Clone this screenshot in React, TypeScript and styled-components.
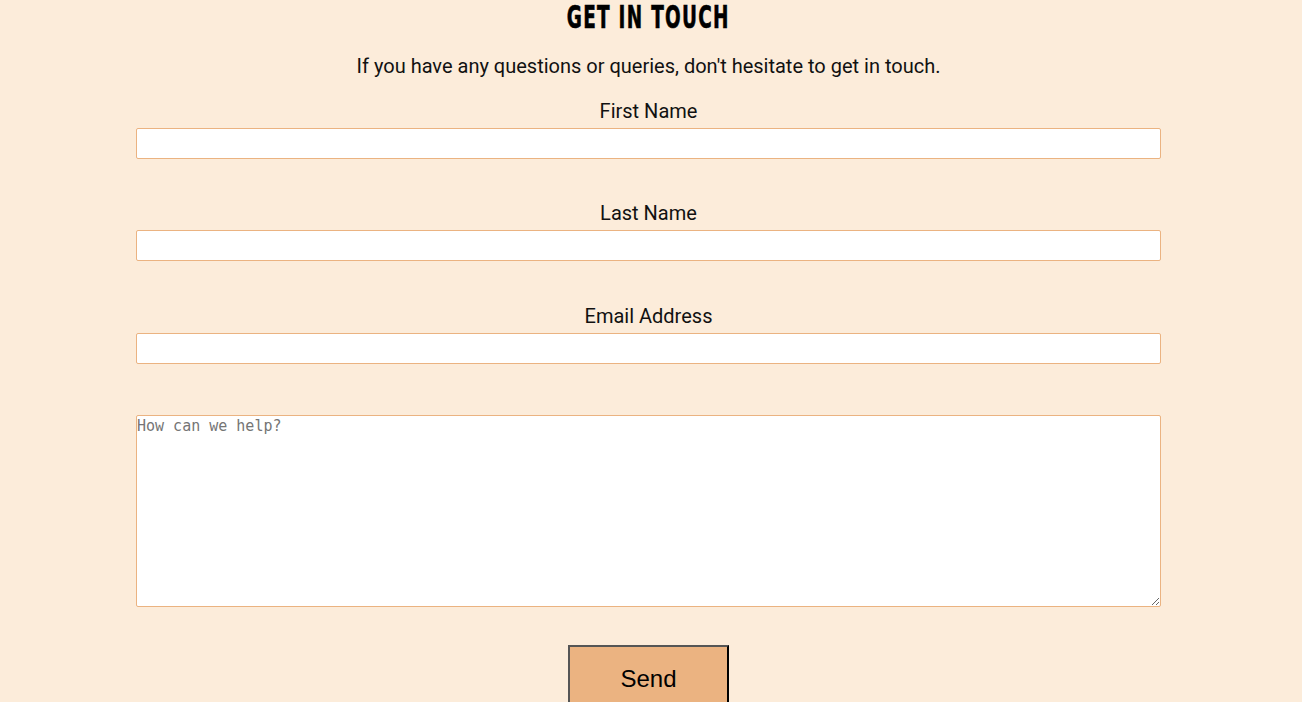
import React from "react";
import styled, { createGlobalStyle } from "styled-components";

const GlobalStyle = createGlobalStyle`
  body {
    margin: 0;
    background: #fcecda;
    font-family: Roboto, "Liberation Sans", sans-serif;
  }
`;

const Page = styled.section`
  display: flex;
  flex-direction: column;
  align-items: center;
  padding: 0 141px 0 136px;
`;

const Title = styled.h1`
  margin: 0;
  font-family: "DejaVu Sans Condensed", "DejaVu Sans", sans-serif;
  font-weight: 900;
  font-size: 32px;
  line-height: 34px;
  letter-spacing: 2px;
  transform: scaleX(0.64);
  color: #000;
  -webkit-text-stroke: 0.6px #000;
`;

const Intro = styled.p`
  margin: 21px 0 0;
  font-size: 20px;
  line-height: 23px;
  color: #111;
`;

const Form = styled.form`
  display: flex;
  flex-direction: column;
  align-items: center;
  width: 100%;
  margin-top: 22px;
`;

const Field = styled.div<{ $gap?: number }>`
  display: flex;
  flex-direction: column;
  align-items: center;
  width: 100%;
  margin-bottom: ${(p) => p.$gap ?? 43}px;
`;

const Label = styled.label`
  font-size: 20px;
  line-height: 23px;
  margin-bottom: 5px;
  color: #111;
`;

const Input = styled.input`
  box-sizing: border-box;
  width: 100%;
  height: 31px;
  border: 1px solid #ebb381;
  border-radius: 2px;
  background: #fff;
  outline: none;
`;

const TextArea = styled.textarea`
  box-sizing: border-box;
  width: 100%;
  height: 192px;
  border: 1px solid #ebb381;
  border-radius: 2px;
  background: #fff;
  padding: 1px 0;
  font-family: "DejaVu Sans Mono", monospace;
  font-size: 15px;
  outline: none;
  &::placeholder {
    color: #757575;
  }
`;

const SendButton = styled.button`
  margin-top: 38px;
  width: 161px;
  height: 68px;
  background: #ebb381;
  border: 2px solid;
  border-color: #555 #000 #000 #555;
  font-family: "Liberation Sans", Arial, sans-serif;
  font-size: 24px;
  color: #000;
  padding: 0 0 1px;
  cursor: pointer;
`;

export default function App() {
  return (
    <>
      <GlobalStyle />
      <Page>
        <Title>GET IN TOUCH</Title>
        <Intro>
          If you have any questions or queries, don't hesitate to get in touch.
        </Intro>
        <Form onSubmit={(e) => e.preventDefault()}>
          <Field>
            <Label htmlFor="first">First Name</Label>
            <Input id="first" type="text" />
          </Field>
          <Field $gap={44}>
            <Label htmlFor="last">Last Name</Label>
            <Input id="last" type="text" />
          </Field>
          <Field $gap={51}>
            <Label htmlFor="email">Email Address</Label>
            <Input id="email" type="email" />
          </Field>
          <TextArea placeholder="How can we help?" />
          <SendButton type="submit">Send</SendButton>
        </Form>
      </Page>
    </>
  );
}
